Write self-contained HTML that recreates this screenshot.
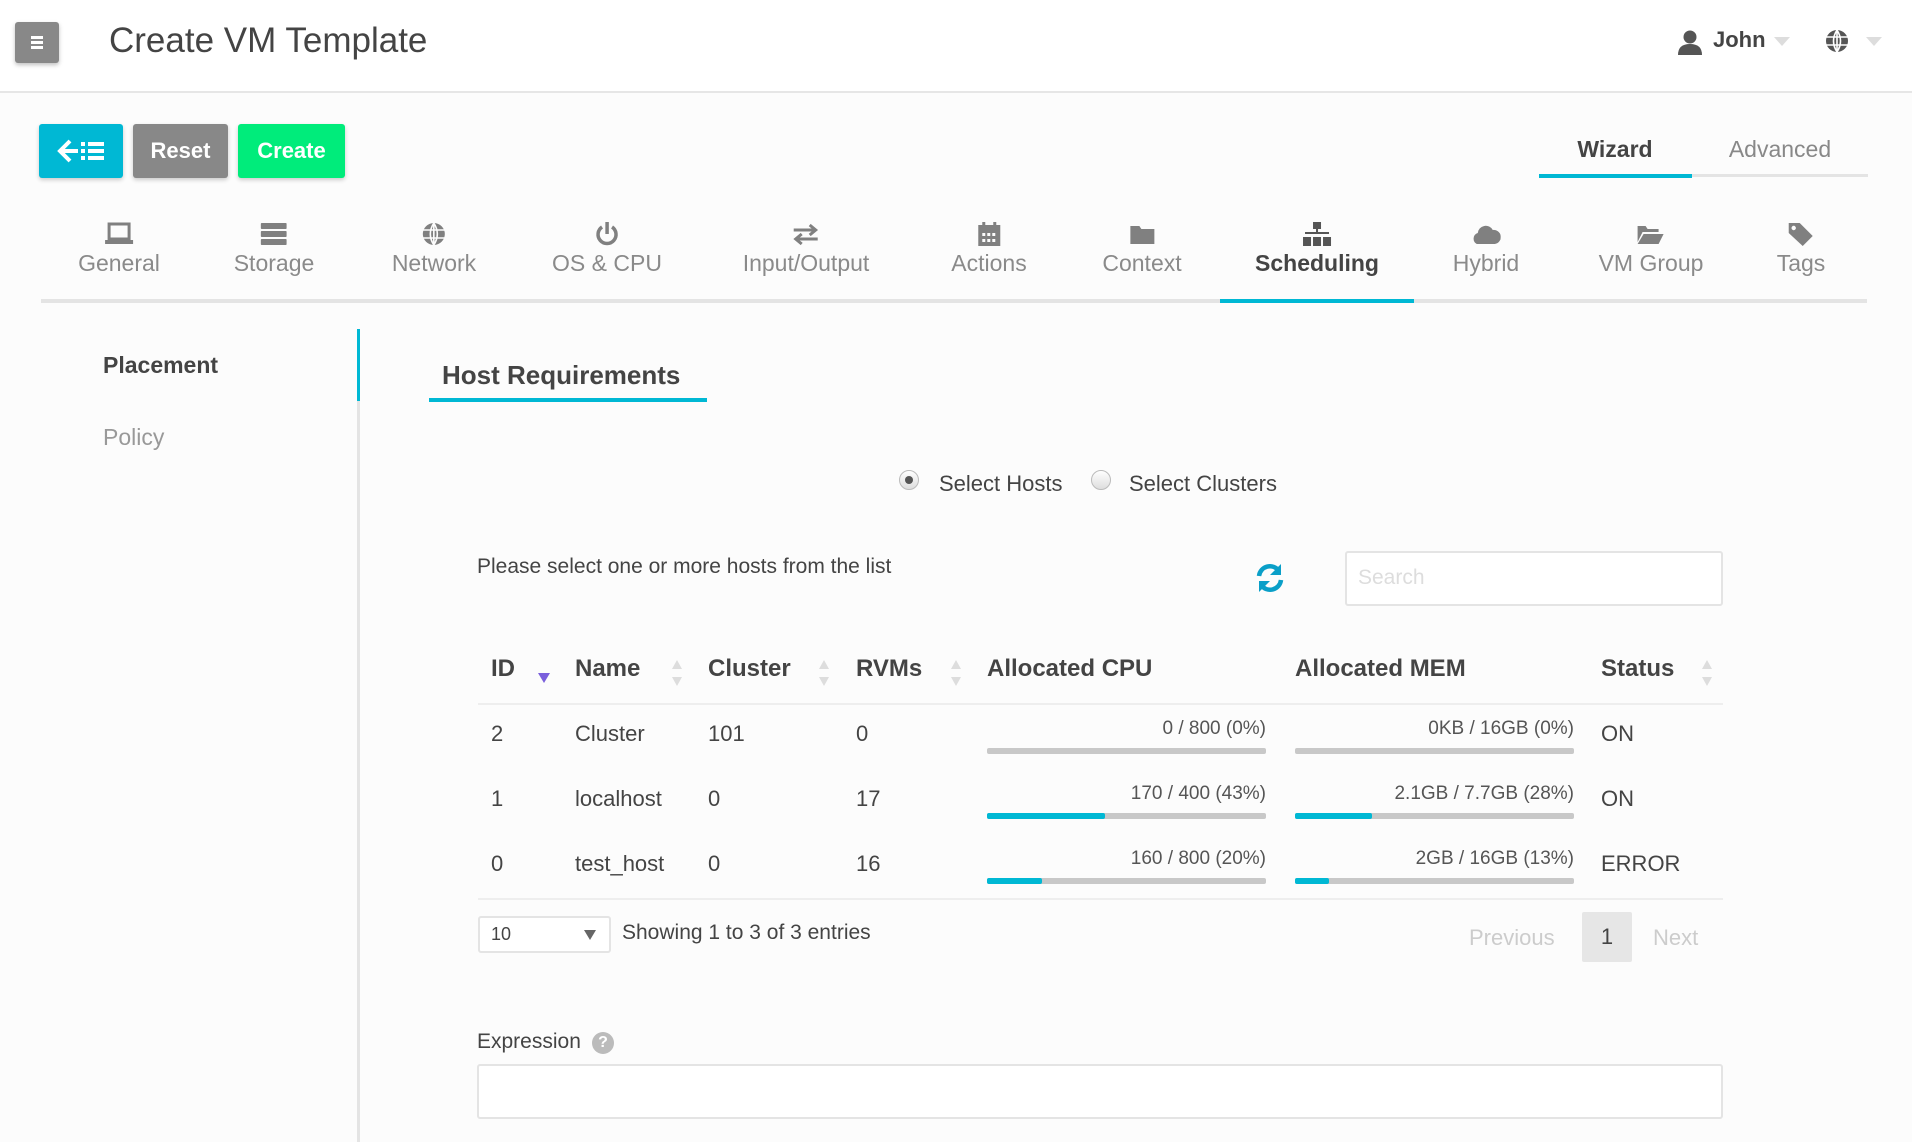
<!DOCTYPE html>
<html><head><meta charset="utf-8"><style>
*{box-sizing:border-box;margin:0;padding:0}
body{width:1912px;height:1142px;overflow:hidden;background:#fcfcfc;font-family:"Liberation Sans",sans-serif;color:#444;position:relative}
.a{position:absolute;white-space:nowrap}
.c{transform:translateX(-50%);text-align:center}
.tab{position:absolute;top:222px;transform:translateX(-50%);text-align:center;color:#8a8a8a;font-size:23px}
.tab svg{display:block;margin:0 auto 4px;fill:#808080}
.th{position:absolute;top:655px;font-size:24px;font-weight:bold;color:#444}
.td{position:absolute;font-size:22px;color:#444}
.bar{position:absolute;height:6px;background:#c8c8c8;border-radius:2px;width:279px}
.bar i{display:block;height:6px;background:#00b8d4;border-radius:2px}
.bl{position:absolute;font-size:19px;color:#555;text-align:right;width:279px}
.sort{position:absolute;top:660px;width:10px;height:26px}
.sort:before{content:"";position:absolute;left:0;top:0;border:5px solid transparent;border-bottom:9px solid #ddd;border-top:0}
.sort:after{content:"";position:absolute;left:0;bottom:0;border:5px solid transparent;border-top:9px solid #ddd;border-bottom:0}
</style></head><body>
<!-- header -->
<div class="a" style="left:0;top:0;width:1912px;height:93px;background:#fff;border-bottom:2px solid #e6e6e6"></div>
<div class="a" style="left:15px;top:22px;width:44px;height:41px;background:#888;border-radius:3px;box-shadow:0 2px 4px rgba(0,0,0,.25)"></div>
<div class="a" style="left:31px;top:36px;width:12px;height:3px;background:#fff;box-shadow:0 5px 0 #fff,0 10px 0 #fff"></div>
<div class="a" style="left:109px;top:18px;font-size:35px;line-height:46px;color:#444;font-weight:500">Create VM Template</div>
<svg class="a" style="left:1677px;top:29px" width="26" height="26" viewBox="0 0 26 26"><circle cx="13" cy="8" r="6.5" fill="#555"/><path d="M1 26 Q1 15 13 15 Q25 15 25 26Z" fill="#555"/></svg>
<div class="a" style="left:1713px;top:27px;font-size:22px;font-weight:bold;color:#444">John</div>
<div class="a" style="left:1774px;top:37px;border:8px solid transparent;border-top:9px solid #ddd"></div>
<svg class="a" style="left:1825px;top:29px" width="24" height="24" viewBox="0 0 24 24"><circle cx="12" cy="12" r="11" fill="#555"/><path d="M1 8H23M1 16H23M12 1V23M12 1Q5 12 12 23M12 1Q19 12 12 23" stroke="#fff" stroke-width="1.6" fill="none"/></svg>
<div class="a" style="left:1866px;top:37px;border:8px solid transparent;border-top:9px solid #ddd"></div>
<!-- buttons -->
<div class="a" style="left:39px;top:124px;width:84px;height:54px;background:#00b8d4;border-radius:3px;box-shadow:0 2px 4px rgba(0,0,0,.2)"></div>
<svg class="a" style="left:56px;top:138px" width="52" height="26" viewBox="0 0 52 26"><path d="M14 3L4 13L14 23M4 13H22" stroke="#fff" stroke-width="4" fill="none"/><rect x="25" y="4" width="4" height="4" fill="#fff"/><rect x="25" y="11" width="4" height="4" fill="#fff"/><rect x="25" y="18" width="4" height="4" fill="#fff"/><rect x="32" y="4" width="16" height="4" fill="#fff"/><rect x="32" y="11" width="16" height="4" fill="#fff"/><rect x="32" y="18" width="16" height="4" fill="#fff"/></svg>
<div class="a" style="left:133px;top:124px;width:95px;height:54px;background:#888;border-radius:3px;color:#fff;font-size:22px;line-height:54px;text-align:center;font-weight:bold;box-shadow:0 2px 4px rgba(0,0,0,.2)">Reset</div>
<div class="a" style="left:238px;top:124px;width:107px;height:54px;background:#00ec7b;border-radius:3px;color:#fff;font-size:22px;line-height:54px;text-align:center;font-weight:bold;box-shadow:0 2px 4px rgba(0,0,0,.2)">Create</div>
<!-- wizard/advanced -->
<div class="a" style="left:1539px;top:174px;width:329px;height:3px;background:#e4e4e4"></div>
<div class="a" style="left:1539px;top:174px;width:153px;height:4px;background:#00b8d4"></div>
<div class="a c" style="left:1615px;top:136px;font-size:23px;font-weight:bold;color:#444">Wizard</div>
<div class="a c" style="left:1780px;top:136px;font-size:23px;color:#888">Advanced</div>
<!-- step tabs -->
<div class="a" style="left:41px;top:299px;width:1826px;height:4px;background:#e4e4e4"></div>
<div class="a" style="left:1220px;top:299px;width:194px;height:4px;background:#00b8d4"></div>
<div class="tab" style="left:119px"><svg width="30" height="24" viewBox="0 0 30 24"><path d="M5 2H25V17H5Z" fill="none" stroke="#808080" stroke-width="3"/><rect x="1" y="18" width="28" height="4"/></svg>General</div>
<div class="tab" style="left:274px"><svg width="26" height="24" viewBox="0 0 26 24"><rect x="0" y="1" width="26" height="6" rx="1"/><rect x="0" y="9" width="26" height="6" rx="1"/><rect x="0" y="17" width="26" height="6" rx="1"/></svg>Storage</div>
<div class="tab" style="left:434px"><svg width="24" height="24" viewBox="0 0 24 24"><circle cx="12" cy="12" r="11"/><path d="M1 8H23M1 16H23M12 1V23M12 1Q5 12 12 23M12 1Q19 12 12 23" stroke="#fcfcfc" stroke-width="1.6" fill="none"/></svg>Network</div>
<div class="tab" style="left:607px"><svg width="24" height="24" viewBox="0 0 24 24"><path d="M7 5A9 9 0 1 0 17 5" stroke="#808080" stroke-width="3.5" fill="none"/><rect x="10.3" y="0" width="3.5" height="12"/></svg>OS &amp; CPU</div>
<div class="tab" style="left:806px"><svg width="28" height="24" viewBox="0 0 28 24"><path d="M2 8H24M18 3L24 8L18 13M26 17H4M10 12L4 17L10 22" stroke="#808080" stroke-width="3" fill="none"/></svg>Input/Output</div>
<div class="tab" style="left:989px"><svg width="24" height="24" viewBox="0 0 24 24"><rect x="1" y="3" width="22" height="21"/><rect x="5" y="0" width="3" height="5"/><rect x="16" y="0" width="3" height="5"/><path d="M5 11h3v3H5zm5 0h3v3h-3zm5 0h3v3h-3zM5 17h3v3H5zm5 0h3v3h-3zm5 0h3v3h-3z" fill="#fcfcfc"/></svg>Actions</div>
<div class="tab" style="left:1142px"><svg width="26" height="24" viewBox="0 0 26 24"><path d="M1 4H10L12 7H25V22H1Z"/></svg>Context</div>
<div class="tab" style="left:1317px;color:#444;font-weight:bold"><svg width="30" height="24" viewBox="0 0 30 24" style="fill:#555"><rect x="11" y="0" width="8" height="7"/><rect x="14" y="7" width="2" height="4"/><rect x="3" y="10" width="24" height="2"/><rect x="1" y="15" width="8" height="9"/><rect x="11" y="15" width="8" height="9"/><rect x="21" y="15" width="8" height="9"/></svg>Scheduling</div>
<div class="tab" style="left:1486px"><svg width="30" height="24" viewBox="0 0 30 24"><path d="M6 22A6 6 0 0 1 7 11A8 8 0 0 1 22 8A7 7 0 0 1 24 22Z"/></svg>Hybrid</div>
<div class="tab" style="left:1651px"><svg width="28" height="24" viewBox="0 0 28 24"><path d="M1 4H9L11 7H22V10H6L1 20Z"/><path d="M7 12H27L22 22H1Z"/></svg>VM Group</div>
<div class="tab" style="left:1801px"><svg width="26" height="24" viewBox="0 0 26 24"><path d="M1 1H12L25 14L15 24L1 11Z"/><circle cx="6" cy="6" r="2.2" fill="#fcfcfc"/></svg>Tags</div>
<!-- sidebar -->
<div class="a" style="left:357px;top:329px;width:3px;height:813px;background:#e4e4e4"></div>
<div class="a" style="left:357px;top:329px;width:3px;height:72px;background:#00b8d4"></div>
<div class="a" style="left:103px;top:352px;font-size:23px;font-weight:bold;color:#444">Placement</div>
<div class="a" style="left:103px;top:424px;font-size:23px;color:#999">Policy</div>
<!-- content -->
<div class="a" style="left:442px;top:360px;font-size:26px;font-weight:bold;color:#444">Host Requirements</div>
<div class="a" style="left:429px;top:398px;width:278px;height:4px;background:#00b8d4"></div>
<div class="a" style="left:899px;top:470px;width:20px;height:20px;border-radius:50%;background:linear-gradient(#fff,#ddd);border:1px solid #bbb"></div>
<div class="a" style="left:905px;top:476px;width:8px;height:8px;border-radius:50%;background:#555"></div>
<div class="a" style="left:939px;top:471px;font-size:22px;color:#444">Select Hosts</div>
<div class="a" style="left:1091px;top:470px;width:20px;height:20px;border-radius:50%;background:linear-gradient(#fff,#ddd);border:1px solid #bbb"></div>
<div class="a" style="left:1129px;top:471px;font-size:22px;color:#444">Select Clusters</div>
<div class="a" style="left:477px;top:555px;font-size:21px;color:#444">Please select one or more hosts from the list</div>
<svg class="a" style="left:1254px;top:562px" width="32" height="32" viewBox="0 0 32 32"><path d="M5 14A11 11 0 0 1 25 9" stroke="#0a9fc8" stroke-width="4.5" fill="none"/><path d="M27 2V13H16Z" fill="#0a9fc8"/><path d="M27 18A11 11 0 0 1 7 23" stroke="#0a9fc8" stroke-width="4.5" fill="none"/><path d="M5 30V19H16Z" fill="#0a9fc8"/></svg>
<div class="a" style="left:1345px;top:551px;width:378px;height:55px;border:2px solid #e4e4e4;border-radius:3px;background:#fff"></div>
<div class="a" style="left:1358px;top:566px;font-size:21px;color:#ddd">Search</div>
<!-- table -->
<div class="th" style="left:491px">ID</div>
<div class="a" style="left:538px;top:673px;border:6px solid transparent;border-top:10px solid #7a5fdc"></div>
<div class="th" style="left:575px">Name</div><div class="sort" style="left:672px"></div>
<div class="th" style="left:708px">Cluster</div><div class="sort" style="left:819px"></div>
<div class="th" style="left:856px">RVMs</div><div class="sort" style="left:951px"></div>
<div class="th" style="left:987px">Allocated CPU</div>
<div class="th" style="left:1295px">Allocated MEM</div>
<div class="th" style="left:1601px">Status</div><div class="sort" style="left:1702px"></div>
<div class="a" style="left:478px;top:703px;width:1245px;height:2px;background:#eee"></div>
<div class="a" style="left:478px;top:898px;width:1245px;height:2px;background:#eee"></div>

<div class="td" style="left:491px;top:721px">2</div><div class="td" style="left:575px;top:721px">Cluster</div><div class="td" style="left:708px;top:721px">101</div><div class="td" style="left:856px;top:721px">0</div><div class="td" style="left:1601px;top:721px">ON</div>
<div class="bl" style="left:987px;top:718px">0 / 800 (0%)</div><div class="bar" style="left:987px;top:748px"><i style="width:0"></i></div>
<div class="bl" style="left:1295px;top:718px">0KB / 16GB (0%)</div><div class="bar" style="left:1295px;top:748px"><i style="width:0"></i></div>

<div class="td" style="left:491px;top:786px">1</div><div class="td" style="left:575px;top:786px">localhost</div><div class="td" style="left:708px;top:786px">0</div><div class="td" style="left:856px;top:786px">17</div><div class="td" style="left:1601px;top:786px">ON</div>
<div class="bl" style="left:987px;top:783px">170 / 400 (43%)</div><div class="bar" style="left:987px;top:813px"><i style="width:118px"></i></div>
<div class="bl" style="left:1295px;top:783px">2.1GB / 7.7GB (28%)</div><div class="bar" style="left:1295px;top:813px"><i style="width:77px"></i></div>

<div class="td" style="left:491px;top:851px">0</div><div class="td" style="left:575px;top:851px">test_host</div><div class="td" style="left:708px;top:851px">0</div><div class="td" style="left:856px;top:851px">16</div><div class="td" style="left:1601px;top:851px">ERROR</div>
<div class="bl" style="left:987px;top:848px">160 / 800 (20%)</div><div class="bar" style="left:987px;top:878px"><i style="width:55px"></i></div>
<div class="bl" style="left:1295px;top:848px">2GB / 16GB (13%)</div><div class="bar" style="left:1295px;top:878px"><i style="width:34px"></i></div>

<!-- footer -->
<div class="a" style="left:478px;top:916px;width:133px;height:37px;border:2px solid #e4e4e4;border-radius:3px;background:#fff"></div>
<div class="a" style="left:491px;top:924px;font-size:18px;color:#444">10</div>
<div class="a" style="left:584px;top:930px;border:6px solid transparent;border-top:10px solid #666"></div>
<div class="a" style="left:622px;top:921px;font-size:21px;color:#444">Showing 1 to 3 of 3 entries</div>
<div class="a" style="left:1469px;top:925px;font-size:22px;color:#ccc">Previous</div>
<div class="a" style="left:1582px;top:912px;width:50px;height:50px;background:#e6e6e6;border-radius:2px;font-size:22px;line-height:50px;text-align:center;color:#444">1</div>
<div class="a" style="left:1653px;top:925px;font-size:22px;color:#ccc">Next</div>
<div class="a" style="left:477px;top:1030px;font-size:21px;color:#444">Expression</div>
<div class="a" style="left:592px;top:1032px;width:22px;height:22px;border-radius:50%;background:#bbb;color:#fff;font-size:16px;font-weight:bold;line-height:22px;text-align:center">?</div>
<div class="a" style="left:477px;top:1064px;width:1246px;height:55px;border:2px solid #e4e4e4;border-radius:3px;background:#fff"></div>
</body></html>
